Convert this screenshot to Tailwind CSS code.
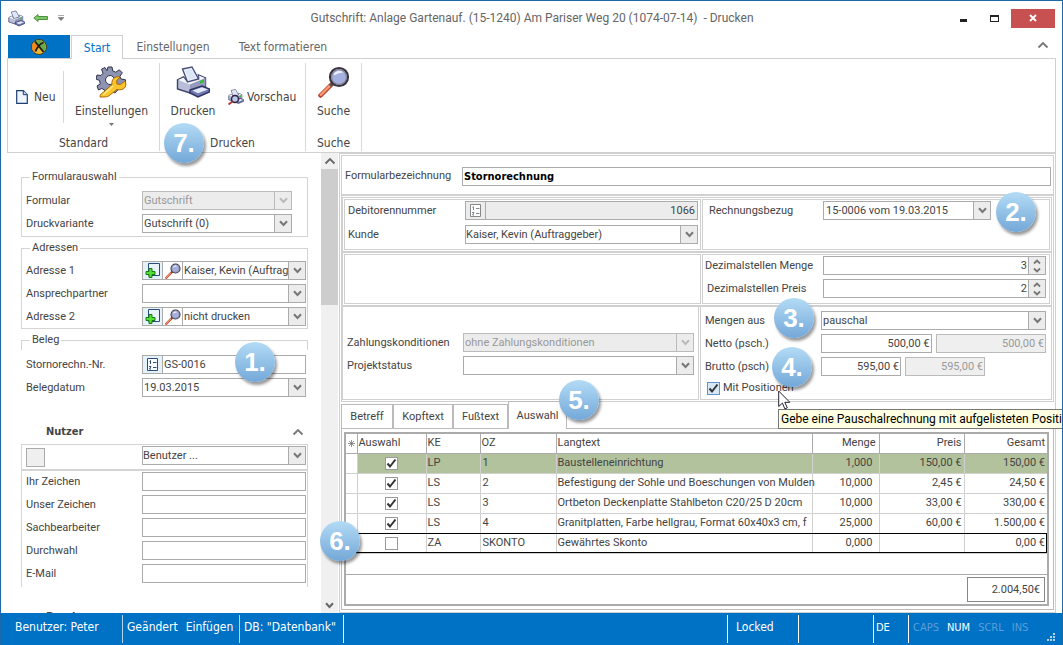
<!DOCTYPE html>
<html lang="de">
<head>
    <meta charset="UTF-8">
    <meta name="viewport" content="width=device-width, initial-scale=1.0">
    <title>Gutschrift - Drucken</title>
    <script src="https://cdn.jsdelivr.net/npm/@tailwindcss/browser@4"></script>
</head>
<body class="relative flex h-screen flex-col overflow-hidden border-x border-t border-[#1b69a8] bg-white font-[Roboto,sans-serif] text-[11px] leading-4 text-[#444]">

    <!-- Shared icons -->
    <svg class="hidden">
        <symbol id="chevron-down" viewBox="0 0 9 7"><path d="M1 1.2 4.5 5 8 1.2" fill="none" stroke="currentColor" stroke-width="2"/></symbol>
        <symbol id="chevron-up" viewBox="0 0 12 8"><path d="M1.5 6.5 6 2l4.500 4.500" fill="none" stroke="currentColor" stroke-width="1.800"/></symbol>
        <symbol id="spin" viewBox="0 0 8 14"><path d="M1 4.500 4 1.500l3 3M1 9.500l3 3 3-3" fill="none" stroke="currentColor" stroke-width="1.800"/></symbol>
        <symbol id="check" viewBox="0 0 13 13"><path d="M2.500 6.500 5 9.500l5.500-7" fill="none" stroke="currentColor" stroke-width="2"/></symbol>
        <symbol id="printer" viewBox="0 0 34 32">
            <path d="m1.500 14 6-3 3 4 13-3-1-3 7 3v9L14 27l-12.500-4z" fill="#b9bdd8" stroke="#3b406c" stroke-width="1.400"/>
            <path d="m2 14 12 4.500L29 12l-6-2.500.5 3-13 3-3-4z" fill="#f4f5fa"/>
            <path d="M6.500 3 16 1l6.500 12-11 3z" fill="#f0f5fd" stroke="#4a4f7c" stroke-width="1.400"/>
            <path d="m9 4.500 6.500-1.500 4.500 9-7 2z" fill="#dbe6f8"/>
            <path d="m14 18.500 15.500-6.300V20L14 26.500z" fill="#959abd"/>
            <path d="m24 15 4-1.500v2.500L24 17.500z" fill="#2fc12f"/>
            <path d="m14 24 12-4 7.500 3v3L22 31l-8-4z" fill="#7079b0" stroke="#2f3362" stroke-width="1.400"/>
            <path d="m16.500 24.500 9.500-3.200 6 2.200-10 3.800z" fill="#e3e9f8"/>
        </symbol>
        <symbol id="loupe" viewBox="0 0 32 32">
            <path d="m2.500 29.500 11-11" stroke="#b8402a" stroke-width="4.500" stroke-linecap="round"/>
            <path d="m2.800 28.800 9-9" stroke="#fb9a74" stroke-width="2.400" stroke-linecap="round"/>
            <path d="m12 20 3-3" stroke="#555" stroke-width="3"/>
            <circle cx="21" cy="11" r="9" fill="#a4b0df" stroke="#37323f" stroke-width="2.200"/>
            <circle cx="21" cy="11" r="7.400" fill="none" stroke="#8c8794" stroke-width="1.200"/>
            <path d="M15.500 9.500a6 6 0 0 1 10-3c-3 0-6 1-10 3z" fill="#eef2ff"/>
        </symbol>
        <symbol id="add-page" viewBox="0 0 15 15">
            <path d="M3.500 .500h11v12h-11z" fill="#e8f3fd" stroke="#2a4d7c"/>
            <path d="M4 5.500h3v3h3v3H7v3H4v-3H1v-3h3z" fill="#55e035" stroke="#187a14"/>
        </symbol>
        <symbol id="numbering" viewBox="0 0 13 15">
            <path d="M1.500 1.500h10v12h-10z" fill="#fdfeff" stroke="currentColor"/>
            <path d="M3.500 4.500 4.500 3.500V7M3 9.500h2L3.500 12H5M7 5.500h3.500M7 10.500h3.500" fill="none" stroke="currentColor"/>
        </symbol>
    </svg>

    <!-- Title bar -->
    <header class="flex h-[34px] shrink-0 items-center pr-[7px] pl-[7px] text-[#666]">
        <svg class="size-[17px]"><use href="#printer"/></svg>
        <svg class="ml-2 h-2.5 w-[15px]" viewBox="0 0 15 10"><path d="M5 1.500v2h9.500v3H5v2L.8 5z" fill="#7fc868" stroke="#4a9440"/></svg>
        <svg class="ml-2.5 size-[6px]" viewBox="0 0 6 6"><path d="M0 .5h6M0 2.500h6L3 5.500z" fill="#777" stroke="#777" stroke-width=".6"/></svg>
        <h1 class="min-w-0 flex-1 pl-10 text-center text-xs">Gutschrift: Anlage Gartenauf. (15-1240) Am Pariser Weg 20 (1074-07-14)&nbsp; - Drucken</h1>
        <button aria-label="Minimieren" class="mr-[22px] flex h-4 w-2 items-end pb-1"><span class="h-[3px] w-[7px] bg-[#222]"></span></button>
        <button aria-label="Maximieren" class="mr-3 h-[7px] w-[9px] border border-t-2 border-[#222]"></button>
        <button aria-label="Schließen" class="flex h-[19px] w-11 items-center justify-center bg-[#c75050]">
            <svg class="size-2" viewBox="0 0 8 8"><path d="m1 1 6 6M7 1 1 7" stroke="#fff" stroke-width="1.800"/></svg>
        </button>
    </header>

    <!-- Ribbon tabs -->
    <nav class="flex h-[23px] shrink-0 items-stretch pl-[7px] font-['DejaVu_Sans_Condensed','DejaVu_Sans',sans-serif] text-xs text-[#666]">
        <button aria-label="Datei" class="flex w-[62px] items-center justify-center bg-[#0072c6]">
            <svg class="size-4" viewBox="0 0 16 16"><circle cx="8" cy="8" r="7.500" fill="#e8b93a" stroke="#433a1c"/><path d="M8 8 3 2.800A7 7 0 0 0 3 13z" fill="#f08a1e"/><path d="m8 8 4.500-5A7 7 0 0 0 4 2.400zM8 8l4.500 5a7 7 0 0 0 0-10z" fill="#69a94b"/><path d="M4 2.500 12.500 13M12.500 3.500c-3 1-6 4-8 9" fill="none" stroke="#1c1c12" stroke-width="1.800"/></svg>
        </button>
        <button class="z-10 -mb-px ml-px w-[52px] border border-b-0 border-[#d0d0d0] bg-white text-[#0072c6]">Start</button>
        <button class="w-[100px]">Einstellungen</button>
        <button class="w-[120px]">Text formatieren</button>
        <button aria-label="Menüband minimieren" class="mr-[13px] mb-1 ml-auto text-[#777]"><svg class="h-2 w-3"><use href="#chevron-up"/></svg></button>
    </nav>

    <!-- Ribbon -->
    <section class="mx-[6px] flex h-[95px] shrink-0 border border-[#d0d0d0] pt-1 pb-px font-['DejaVu_Sans_Condensed','DejaVu_Sans',sans-serif] text-xs">
        <div class="flex w-[151px] flex-col">
            <div class="flex flex-1 items-stretch">
                <button class="mt-2 mb-3 flex w-[56px] items-center gap-1.5 border-r border-[#d8d8d8] pl-2">
                    <svg class="h-3.5 w-3" viewBox="0 0 12 14"><path d="M.7.700h6.600l4 4v8.600H.700z" fill="#edf5fd" stroke="#1e3f73" stroke-width="1.200"/><path d="M7.300.700v4h4" fill="#b8d6f3" stroke="#1e3f73"/></svg>Neu
                </button>
                <button class="flex flex-1 flex-col items-center pt-[3px]">
                    <svg class="size-8" viewBox="0 0 32 32">
                        <path d="m12 1 4 0 .8 4 3 1.200 3.500-2.400 3 3-2.400 3.500L25 13l4.500.8v4L25 19l-1.200 3-5 5-3-2-1.800-.5-1 4-4-.5-.3-4-3-1.500L2.500 24 1 20l3.300-2-.8-3.500L0 13l1-4 4 .500 2-2.300-1.500-4L9 1.500l2 3.200z" fill="#8d93b0" stroke="#30344d"/>
                        <circle cx="14" cy="14" r="4.500" fill="#fff" stroke="#30344d"/>
                        <path d="M4 31c0-3 1-3 3-4.500l9-8c-1-5 3-9 8-7.500l-3.500 4 .5 3 3.500.5L29 15c3 6-2 10-8 8.500L14 29c-2 2-4 2-10 2z" fill="#fbc42a" stroke="#a8690b"/>
                        <path d="m7 29 10-9" stroke="#ffe98d" stroke-width="1.500"/>
                    </svg>
                    <span class="mt-[5px]">Einstellungen</span>
                    <svg class="mt-1 h-[3px] w-[5px]" viewBox="0 0 5 3"><path d="M0 0h5L2.500 3z" fill="#777"/></svg>
                </button>
            </div>
            <div class="text-center">Standard</div>
        </div>
        <div class="flex w-[146px] flex-col border-l border-[#d8d8d8]">
            <div class="flex flex-1">
                <button class="flex w-[66px] flex-col items-center pt-[3px]"><svg class="h-8 w-[34px]"><use href="#printer"/></svg><span class="mt-[5px]">Drucken</span></button>
                <button class="flex flex-1 items-center gap-[3px] pb-1 pl-0.5">
                    <svg class="size-4" viewBox="0 0 16 16"><use href="#printer" width="16" height="15"/><circle cx="7" cy="10" r="3.500" fill="#b9c8ee" stroke="#33223c" stroke-width="1.500"/><path d="m4.500 12.500-4 3" stroke="#b5302a" stroke-width="1.800"/></svg>Vorschau
                </button>
            </div>
            <div class="text-center">Drucken</div>
        </div>
        <div class="flex w-[57px] flex-col border-x border-[#d8d8d8]">
            <button class="flex flex-1 flex-col items-center pt-[3px]"><svg class="size-8"><use href="#loupe"/></svg><span class="mt-[5px]">Suche</span></button>
            <div class="text-center">Suche</div>
        </div>
    </section>

    <main class="flex min-h-0 flex-1 pr-[6px]">
        <!-- Left form -->
        <aside class="w-[320px] shrink-0 overflow-hidden pt-4 pr-[13px] pl-5">
            <fieldset class="min-w-0 border border-[#d4d4d4] pt-[6px] pb-[3px] pl-1">
                <legend class="ml-1 px-0.5">Formularauswahl</legend>
                <div class="flex items-center">
                    <label for="formular" class="w-[116px]">Formular</label>
                    <div class="flex h-[19px] w-[150px] border border-[#bbb] bg-[#ececec] text-[#999]">
                        <select id="formular" disabled class="min-w-0 flex-1 appearance-none pl-px"><option>Gutschrift</option></select>
                        <span class="flex w-[17px] items-center justify-center border-l border-[#bbb] text-[#bbb]"><svg class="h-[7px] w-[9px]"><use href="#chevron-down"/></svg></span>
                    </div>
                </div>
                <div class="mt-1 flex items-center">
                    <label for="variante" class="w-[116px]">Druckvariante</label>
                    <div class="flex h-[19px] w-[150px] border border-[#ababab]">
                        <select id="variante" class="min-w-0 flex-1 appearance-none pl-px"><option>Gutschrift (0)</option></select>
                        <span class="flex w-[17px] items-center justify-center border-l border-[#ababab] bg-[#ececec] text-[#777]"><svg class="h-[7px] w-[9px]"><use href="#chevron-down"/></svg></span>
                    </div>
                </div>
            </fieldset>

            <fieldset class="mt-[3px] min-w-0 border border-[#d4d4d4] pt-[5px] pr-px pb-[2px] pl-1">
                <legend class="ml-1 px-0.5">Adressen</legend>
                <div class="flex items-center">
                    <label for="adresse1" class="w-[116px] shrink-0">Adresse 1</label>
                    <div class="flex h-[19px] min-w-0 flex-1 border border-[#ababab]">
                        <button aria-label="Adresse anlegen" class="flex w-5 shrink-0 items-center justify-center border-r border-[#ababab] bg-[#e5f1fb]"><svg class="size-[15px]"><use href="#add-page"/></svg></button>
                        <button aria-label="Adresse suchen" class="flex w-5 shrink-0 items-center justify-center border-r border-[#ababab]"><svg class="size-4"><use href="#loupe"/></svg></button>
                        <select id="adresse1" class="min-w-0 flex-1 appearance-none pl-px"><option>Kaiser, Kevin (Auftraggeber)</option></select>
                        <span class="flex w-[17px] shrink-0 items-center justify-center border-l border-[#ababab] bg-[#ececec] text-[#777]"><svg class="h-[7px] w-[9px]"><use href="#chevron-down"/></svg></span>
                    </div>
                </div>
                <div class="mt-1 flex items-center">
                    <label for="partner" class="w-[116px] shrink-0">Ansprechpartner</label>
                    <div class="flex h-[19px] min-w-0 flex-1 border border-[#ababab]">
                        <select id="partner" class="min-w-0 flex-1 appearance-none pl-px"><option></option></select>
                        <span class="flex w-[17px] items-center justify-center border-l border-[#ababab] bg-[#ececec] text-[#777]"><svg class="h-[7px] w-[9px]"><use href="#chevron-down"/></svg></span>
                    </div>
                </div>
                <div class="mt-1 flex items-center">
                    <label for="adresse2" class="w-[116px] shrink-0">Adresse 2</label>
                    <div class="flex h-[19px] min-w-0 flex-1 border border-[#ababab]">
                        <button aria-label="Adresse anlegen" class="flex w-5 shrink-0 items-center justify-center border-r border-[#ababab] bg-[#e5f1fb]"><svg class="size-[15px]"><use href="#add-page"/></svg></button>
                        <button aria-label="Adresse suchen" class="flex w-5 shrink-0 items-center justify-center border-r border-[#ababab]"><svg class="size-4"><use href="#loupe"/></svg></button>
                        <select id="adresse2" class="min-w-0 flex-1 appearance-none pl-px"><option>nicht drucken</option></select>
                        <span class="flex w-[17px] shrink-0 items-center justify-center border-l border-[#ababab] bg-[#ececec] text-[#777]"><svg class="h-[7px] w-[9px]"><use href="#chevron-down"/></svg></span>
                    </div>
                </div>
            </fieldset>

            <fieldset class="mt-[3px] min-w-0 border border-b-0 border-[#d4d4d4] pt-[7px] pr-px pl-1 [border-image:linear-gradient(#d4d4d4_10px,transparent_10px)_1]">
                <legend class="ml-1 px-0.5">Beleg</legend>
                <div class="flex items-center">
                    <label for="nummer" class="w-[116px] shrink-0">Stornorechn.-Nr.</label>
                    <div class="flex h-[19px] min-w-0 flex-1 border border-[#ababab]">
                        <button aria-label="Nummer vergeben" class="flex w-5 shrink-0 items-center justify-center border-r border-[#ababab] bg-[#e5f1fb] text-[#2a4d7c]"><svg class="h-[15px] w-[13px]"><use href="#numbering"/></svg></button>
                        <input id="nummer" value="GS-0016" class="min-w-0 flex-1 pl-px">
                    </div>
                </div>
                <div class="mt-1 flex items-center">
                    <label for="datum" class="w-[116px] shrink-0">Belegdatum</label>
                    <div class="flex h-[19px] min-w-0 flex-1 border border-[#ababab]">
                        <select id="datum" class="min-w-0 flex-1 appearance-none pl-px"><option>19.03.2015</option></select>
                        <span class="flex w-[17px] items-center justify-center border-l border-[#ababab] bg-[#ececec] text-[#777]"><svg class="h-[7px] w-[9px]"><use href="#chevron-down"/></svg></span>
                    </div>
                </div>
            </fieldset>

            <div class="mt-[27px] flex items-center justify-between pr-1 pl-[25px]">
                <h2 class="font-['DejaVu_Sans_Condensed','DejaVu_Sans',sans-serif] font-bold">Nutzer</h2>
                <button aria-label="Nutzer einklappen" class="text-[#777]"><svg class="h-2 w-3"><use href="#chevron-up"/></svg></button>
            </div>
            <div class="mt-1 border border-b-0 border-[#d4d4d4]">
                <div class="flex items-start justify-between border-b-2 border-[#d4d4d4] pt-px pr-px pb-0.5 pl-1">
                    <button aria-label="Auswählen" class="mt-0.5 size-[19px] border border-[#ababab] bg-[#efefef]"></button>
                    <div class="flex h-[19px] w-[164px] border border-[#ababab]">
                        <select aria-label="Benutzer" class="min-w-0 flex-1 appearance-none"><option>Benutzer ...</option></select>
                        <span class="flex w-[17px] items-center justify-center border-l border-[#ababab] bg-[#ececec] text-[#777]"><svg class="h-[7px] w-[9px]"><use href="#chevron-down"/></svg></span>
                    </div>
                </div>
                <div class="grid grid-cols-[116px_minmax(0,1fr)] items-center gap-y-1 pt-px pr-px pb-1 pl-1">
                    <label for="ihr">Ihr Zeichen</label><input id="ihr" class="h-[19px] min-w-0 border border-[#ababab]">
                    <label for="unser">Unser Zeichen</label><input id="unser" class="h-[19px] min-w-0 border border-[#ababab]">
                    <label for="sach">Sachbearbeiter</label><input id="sach" class="h-[19px] min-w-0 border border-[#ababab]">
                    <label for="durchwahl">Durchwahl</label><input id="durchwahl" class="h-[19px] min-w-0 border border-[#ababab]">
                    <label for="mail">E-Mail</label><input id="mail" class="h-[19px] min-w-0 border border-[#ababab]">
                </div>
            </div>
            <div class="mt-[22px] flex items-center justify-between pr-1 pl-[25px]">
                <h2 class="font-['DejaVu_Sans_Condensed','DejaVu_Sans',sans-serif] font-bold">Drucker</h2>
                <button aria-label="Drucker einklappen" class="text-[#777]"><svg class="h-2 w-3"><use href="#chevron-up"/></svg></button>
            </div>
        </aside>

        <!-- Scrollbar -->
        <div class="flex w-[17px] shrink-0 flex-col items-center bg-[#f0f0f0] text-[#666]">
            <svg class="my-1 h-2 w-3"><use href="#chevron-up"/></svg>
            <div class="h-[136px] w-full bg-[#cdcdcd]"></div>
            <svg class="mt-auto mb-1 h-[7px] w-[9px]"><use href="#chevron-down"/></svg>
        </div>

        <!-- Right form -->
        <div class="ml-px flex min-w-0 flex-1 flex-col border border-[#d0d0d0] p-px">
            <div class="border border-[#d0d0d0]">
                <div class="flex h-10 items-center border-b-2 border-[#d0d0d0] pt-0.5 pr-0.5 pl-[3px]">
                    <label for="bezeichnung" class="w-[117px] shrink-0">Formularbezeichnung</label>
                    <input id="bezeichnung" value="Stornorechnung" class="h-[19px] min-w-0 flex-1 border border-[#ababab] pl-px font-['DejaVu_Sans_Condensed','DejaVu_Sans',sans-serif] font-bold text-black">
                </div>
                <div class="mt-px mr-px grid grid-cols-[357px_minmax(0,1fr)] border border-b-2 border-[#d0d0d0] p-px">
                    <div class="grid grid-cols-[117px_minmax(0,1fr)] content-start items-center gap-y-[5px] border border-[#d0d0d0] pt-px pr-0.5 pb-[5px] pl-[3px]">
                        <label for="debitor">Debitorennummer</label>
                        <div class="flex h-[19px] border border-[#ababab] bg-[#ececec]">
                            <button aria-label="Nummer vergeben" class="flex w-5 items-center justify-center border-r border-[#ababab] text-[#888]"><svg class="h-[15px] w-[13px]"><use href="#numbering"/></svg></button>
                            <input id="debitor" value="1066" readonly class="min-w-0 flex-1 pr-0.5 text-right">
                        </div>
                        <label for="kunde">Kunde</label>
                        <div class="flex h-[19px] border border-[#ababab]">
                            <select id="kunde" class="min-w-0 flex-1 appearance-none"><option>Kaiser, Kevin (Auftraggeber)</option></select>
                            <span class="flex w-[17px] items-center justify-center border-l border-[#ababab] bg-[#ececec] text-[#777]"><svg class="h-[7px] w-[9px]"><use href="#chevron-down"/></svg></span>
                        </div>
                    </div>
                    <div class="ml-px flex items-start border border-[#d0d0d0] pt-px pl-[6px]">
                        <label for="bezug" class="w-[114px] shrink-0 pt-0.5">Rechnungsbezug</label>
                        <div class="flex h-[19px] w-[168px] border border-[#ababab]">
                            <select id="bezug" class="min-w-0 flex-1 appearance-none pl-0.5"><option>15-0006 vom 19.03.2015</option></select>
                            <span class="flex w-[17px] items-center justify-center border-l border-[#ababab] bg-[#ececec] text-[#777]"><svg class="h-[7px] w-[9px]"><use href="#chevron-down"/></svg></span>
                        </div>
                    </div>
                </div>
                <div class="mr-px grid grid-cols-[357px_minmax(0,1fr)] border-x border-b-2 border-[#d0d0d0] p-px">
                    <div class="border border-[#d0d0d0]"></div>
                    <div class="ml-px grid grid-cols-[118px_minmax(0,1fr)] items-center gap-y-1 border border-[#d0d0d0] pt-px pr-[3px] pb-[5px] pl-0.5">
                        <label for="dezmenge">Dezimalstellen Menge</label>
                        <div class="flex h-[19px] border border-[#ababab]">
                            <input id="dezmenge" value="3" class="min-w-0 flex-1 pr-px text-right">
                            <span class="flex w-[17px] items-center justify-center border-l border-[#ababab] bg-[#ececec] text-[#777]"><svg class="h-3.5 w-2"><use href="#spin"/></svg></span>
                        </div>
                        <label for="dezpreis" class="pl-0.5">Dezimalstellen Preis</label>
                        <div class="flex h-[19px] border border-[#ababab]">
                            <input id="dezpreis" value="2" class="min-w-0 flex-1 pr-px text-right">
                            <span class="flex w-[17px] items-center justify-center border-l border-[#ababab] bg-[#ececec] text-[#777]"><svg class="h-3.5 w-2"><use href="#spin"/></svg></span>
                        </div>
                    </div>
                </div>
                <div class="grid grid-cols-[357px_minmax(0,1fr)] pr-px pb-px">
                    <div class="grid grid-cols-[116px_minmax(0,1fr)] content-start items-center gap-y-1 border border-t-0 border-[#d0d0d0] pt-[26px] pr-1 pl-1">
                        <label for="zahlung">Zahlungskonditionen</label>
                        <div class="flex h-[19px] border border-[#bbb] bg-[#ececec] text-[#999]">
                            <select id="zahlung" disabled class="min-w-0 flex-1 appearance-none pl-px"><option>ohne Zahlungskonditionen</option></select>
                            <span class="flex w-[17px] items-center justify-center border-l border-[#bbb] text-[#bbb]"><svg class="h-[7px] w-[9px]"><use href="#chevron-down"/></svg></span>
                        </div>
                        <label for="status">Projektstatus</label>
                        <div class="flex h-[19px] border border-[#ababab]">
                            <select id="status" class="min-w-0 flex-1 appearance-none"><option></option></select>
                            <span class="flex w-[17px] items-center justify-center border-l border-[#ababab] bg-[#ececec] text-[#777]"><svg class="h-[7px] w-[9px]"><use href="#chevron-down"/></svg></span>
                        </div>
                    </div>
                    <div class="ml-px grid grid-cols-[116px_minmax(0,1fr)] items-center gap-y-1 border border-t-0 border-[#d0d0d0] pt-1 pr-[5px] pb-[3px] pl-1">
                        <label for="mengen">Mengen aus</label>
                        <div class="flex h-[19px] border border-[#ababab]">
                            <select id="mengen" class="min-w-0 flex-1 appearance-none pl-px"><option>pauschal</option></select>
                            <span class="flex w-[17px] items-center justify-center border-l border-[#ababab] bg-[#ececec] text-[#777]"><svg class="h-[7px] w-[9px]"><use href="#chevron-down"/></svg></span>
                        </div>
                        <label for="netto">Netto (psch.)</label>
                        <div class="flex gap-1">
                            <input id="netto" value="500,00 €" class="h-[19px] min-w-0 flex-1 border border-[#ababab] pr-px text-right">
                            <input aria-label="Netto berechnet" value="500,00 €" disabled class="h-[19px] min-w-0 flex-1 border border-[#bbb] bg-[#efefef] pr-px text-right text-[#999]">
                        </div>
                        <label for="brutto">Brutto (psch)</label>
                        <div class="flex gap-1">
                            <input id="brutto" value="595,00 €" class="h-[19px] w-20 border border-[#ababab] pr-px text-right">
                            <input aria-label="Brutto berechnet" value="595,00 €" disabled class="h-[19px] w-20 border border-[#bbb] bg-[#efefef] pr-px text-right text-[#999]">
                        </div>
                        <div class="col-span-2 flex h-4 items-center gap-[3px] pl-0.5">
                            <span class="grid size-[13px]">
                                <input id="positionen" type="checkbox" checked class="col-start-1 row-start-1 size-[13px] appearance-none border border-[#5f94c6] bg-[#d6e8f8]">
                                <svg class="pointer-events-none col-start-1 row-start-1 size-[13px] text-[#333]"><use href="#check"/></svg>
                            </span>
                            <label for="positionen">Mit Positionen</label>
                        </div>
                    </div>
                </div>
            </div>

            <!-- Tabs -->
            <div class="-mt-px flex h-[27px] items-end">
                <button class="h-6 w-[52px] border border-b-0 border-[#bbb]">Betreff</button>
                <button class="h-6 w-[60px] border border-b-0 border-[#bbb]">Kopftext</button>
                <button class="h-6 w-[55px] border border-b-0 border-[#bbb]">Fußtext</button>
                <button class="z-10 -mb-px h-[28px] w-[59px] border border-b-0 border-[#bbb] bg-white">Auswahl</button>
            </div>

            <!-- Positions -->
            <div class="mb-px flex min-h-0 flex-1 flex-col border border-[#bbb] pt-[3px] pr-1 pb-[3px] pl-0.5">
                <div class="flex min-h-0 flex-1 flex-col border-2 border-[#ababab]">
                    <table class="w-full table-fixed border-collapse">
                        <colgroup>
                            <col class="w-[11px]"><col class="w-[69px]"><col class="w-[54px]"><col class="w-[76px]"><col><col class="w-[67px]"><col class="w-[85px]"><col class="w-[83px]">
                        </colgroup>
                        <thead>
                            <tr class="h-[19px] border-b border-[#ababab] text-left *:border-r *:border-[#ababab] *:p-0 *:font-normal">
                                <th class="text-center"><svg class="mx-auto size-[7px]" viewBox="0 0 7 7"><path d="M3.500 0v7M0 3.500h7M1 1l5 5M6 1 1 6" stroke="#777" stroke-width=".8"/></svg></th>
                                <th><span class="pl-px">Auswahl</span></th>
                                <th><span class="pl-px">KE</span></th>
                                <th><span class="pl-px">OZ</span></th>
                                <th><span class="pl-px">Langtext</span></th>
                                <th class="text-right"><span class="pr-[3px]">Menge</span></th>
                                <th class="text-right"><span class="pr-0.5">Preis</span></th>
                                <th class="border-r-0! text-right"><span class="pr-0.5">Gesamt</span></th>
                            </tr>
                        </thead>
                        <tbody id="positions"></tbody>
                    </table>
                    <div class="mt-auto flex justify-end border-t border-[#ababab] py-0.5 pr-0.5">
                        <output class="h-[25px] w-[78px] border border-[#888] pr-1 text-right leading-[23px]">2.004,50€</output>
                    </div>
                </div>
            </div>
        </div>
    </main>

    <!-- Status bar -->
    <footer class="-mx-px flex h-8 shrink-0 items-stretch bg-[#0072c6] font-['DejaVu_Sans_Condensed','DejaVu_Sans',sans-serif] text-xs leading-6 text-white">
        <div class="my-0.5 w-[123px] border-r border-[#b5d5ee] pl-[15px]">Benutzer: Peter</div>
        <div class="my-0.5 flex w-[117px] gap-2 border-r border-[#b5d5ee] pl-1"><span>Geändert</span><span>Einfügen</span></div>
        <div class="my-0.5 w-[104px] border-r border-white pl-1">DB: "Datenbank"</div>
        <div class="my-0.5 ml-auto w-[72px] border-x border-white pl-2">Locked</div>
        <div class="my-0.5 w-[75px] border-r border-white"></div>
        <div class="my-0.5 w-[35px] border-r border-white pl-0.5 text-[11px] leading-[26px]">DE</div>
        <div class="my-0.5 flex w-[138px] gap-2 pl-1 text-[11px] leading-[26px] text-[#5b9fd6]"><span>CAPS</span><span class="text-white">NUM</span><span>SCRL</span><span>INS</span></div>
        <svg class="mr-2 mb-1 size-2 self-end" viewBox="0 0 8 8"><path d="M6 0h2v2H6zM3 3h2v2H3zM6 3h2v2H6zM0 6h2v2H0zM3 6h2v2H3zM6 6h2v2H6z" fill="#b5d5ee"/></svg>
    </footer>

    <!-- Tooltip and mouse pointer -->
    <div role="tooltip" class="absolute top-[408px] right-[-1px] left-[777px] h-[20px] overflow-hidden border border-r-0 border-[#777] bg-[#ffffe1] pl-0.5 text-xs leading-[18px] whitespace-nowrap text-black">Gebe eine Pauschalrechnung mit aufgelisteten Positionen aus</div>
    <svg class="absolute top-[389px] left-[777px] z-10 h-[20px] w-[13px]" viewBox="0 0 13 20"><path d="M.7 1v15.500l3.700-3.400 2.500 5.800 2.400-1-2.500-5.600h5z" fill="#fff" stroke="#223" stroke-width="1"/></svg>

    <!-- Step markers -->
    <ol class="font-['Liberation_Sans_Narrow','Liberation_Sans',sans-serif] text-[26px] font-bold text-white *:absolute *:flex *:size-10 *:items-center *:justify-center *:rounded-full *:bg-linear-to-b *:from-[#b3dbf5] *:to-[#74a8d8] *:shadow-[2px_3px_3px_#0006]">
        <li class="top-[341px] left-[234px]">1.</li>
        <li class="top-[191px] left-[995px]">2.</li>
        <li class="top-[297px] left-[773px]">3.</li>
        <li class="top-[346px] left-[771px]">4.</li>
        <li class="top-[379px] left-[558px] z-20">5.</li>
        <li class="top-[520px] left-[319px]">6.</li>
        <li class="top-[122px] left-[163px]">7.</li>
    </ol>

    <script>
        const positions = [
            { on: true, ke: 'LP', oz: '1', text: 'Baustelleneinrichtung', menge: '1,000', preis: '150,00 €', gesamt: '150,00 €' },
            { on: true, ke: 'LS', oz: '2', text: 'Befestigung der Sohle und Boeschungen von Mulden', menge: '10,000', preis: '2,45 €', gesamt: '24,50 €' },
            { on: true, ke: 'LS', oz: '3', text: 'Ortbeton Deckenplatte Stahlbeton C20/25 D 20cm', menge: '10,000', preis: '33,00 €', gesamt: '330,00 €' },
            { on: true, ke: 'LS', oz: '4', text: 'Granitplatten, Farbe hellgrau, Format 60x40x3 cm, f', menge: '25,000', preis: '60,00 €', gesamt: '1.500,00 €' },
            { on: false, ke: 'ZA', oz: 'SKONTO', text: 'Gewährtes Skonto', menge: '0,000', preis: '', gesamt: '0,00 €' }
        ];

        document.getElementById('positions').innerHTML = positions.map((p, i) => {
            let row = 'bg-white';
            if (i === 0) row = 'bg-[#b2c29c]';
            // last row has the focus frame
            if (i === positions.length - 1) row = 'outline -outline-offset-1 outline-black';
            return `
            <tr class="h-5 border-b border-[#d0d0d0] ${row} *:border-r *:border-[#d0d0d0] *:p-0 *:whitespace-nowrap">
                <td class="bg-white"></td>
                <td><span class="mx-auto grid size-[13px]">
                    <input type="checkbox" aria-label="Position ${p.oz}" ${p.on ? 'checked' : ''} class="col-start-1 row-start-1 size-[13px] appearance-none border border-[#999] bg-white">
                    ${p.on ? '<svg class="pointer-events-none col-start-1 row-start-1 size-[13px] text-[#333]"><use href="#check"/></svg>' : ''}
                </span></td>
                <td><span class="pl-px">${p.ke}</span></td>
                <td><span class="pl-0.5">${p.oz}</span></td>
                <td><span class="pl-px">${p.text}</span></td>
                <td class="text-right"><span class="pr-[6px]">${p.menge}</span></td>
                <td class="text-right"><span class="pr-0.5">${p.preis}</span></td>
                <td class="border-r-0! text-right"><span class="pr-0.5">${p.gesamt}</span></td>
            </tr>`;
        }).join('');
    </script>
</body>
</html>
